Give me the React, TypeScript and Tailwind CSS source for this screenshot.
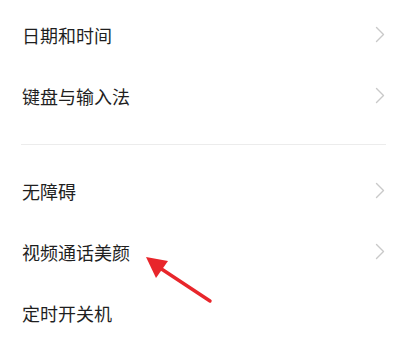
import React from 'react';

const Chevron = () => (
  <svg width="10" height="17" viewBox="0 0 10 17" fill="none">
    <path d="M1.5 1.5 L8.5 8.5 L1.5 15.5" stroke="#c9c9c9" strokeWidth="1.4" strokeLinecap="round" strokeLinejoin="round" />
  </svg>
);

const Row = ({ label, arrow = true }: { label: string; arrow?: boolean }) => (
  <div className="flex h-[61px] items-center justify-between pl-[22px] pr-[22px]">
    <span className="text-[18px] leading-none text-[#1f1f1f]">{label}</span>
    {arrow && <Chevron />}
  </div>
);

export default function App() {
  return (
    <div
      className="relative h-[341px] w-[407px] overflow-hidden bg-white"
      style={{ fontFamily: '"Noto Sans CJK SC", "Noto Sans", sans-serif' }}
    >
      <div className="pt-[4px]">
        <Row label="日期和时间" />
        <Row label="键盘与输入法" />
      </div>
      <div className="mx-[21px] mt-[18px] h-px bg-[#ececec]" />
      <div className="pt-[15px]">
        <Row label="无障碍" />
        <Row label="视频通话美颜" />
        <Row label="定时开关机" arrow={false} />
      </div>

      {/* red annotation arrow */}
      <svg className="absolute left-0 top-0" width="407" height="341" viewBox="0 0 407 341">
        <path d="M210 301 L160 268" stroke="#e8262b" strokeWidth="3.4" strokeLinecap="round" />
        <polygon points="146,257 156,278 168,261" fill="#e8262b" />
      </svg>
    </div>
  );
}
